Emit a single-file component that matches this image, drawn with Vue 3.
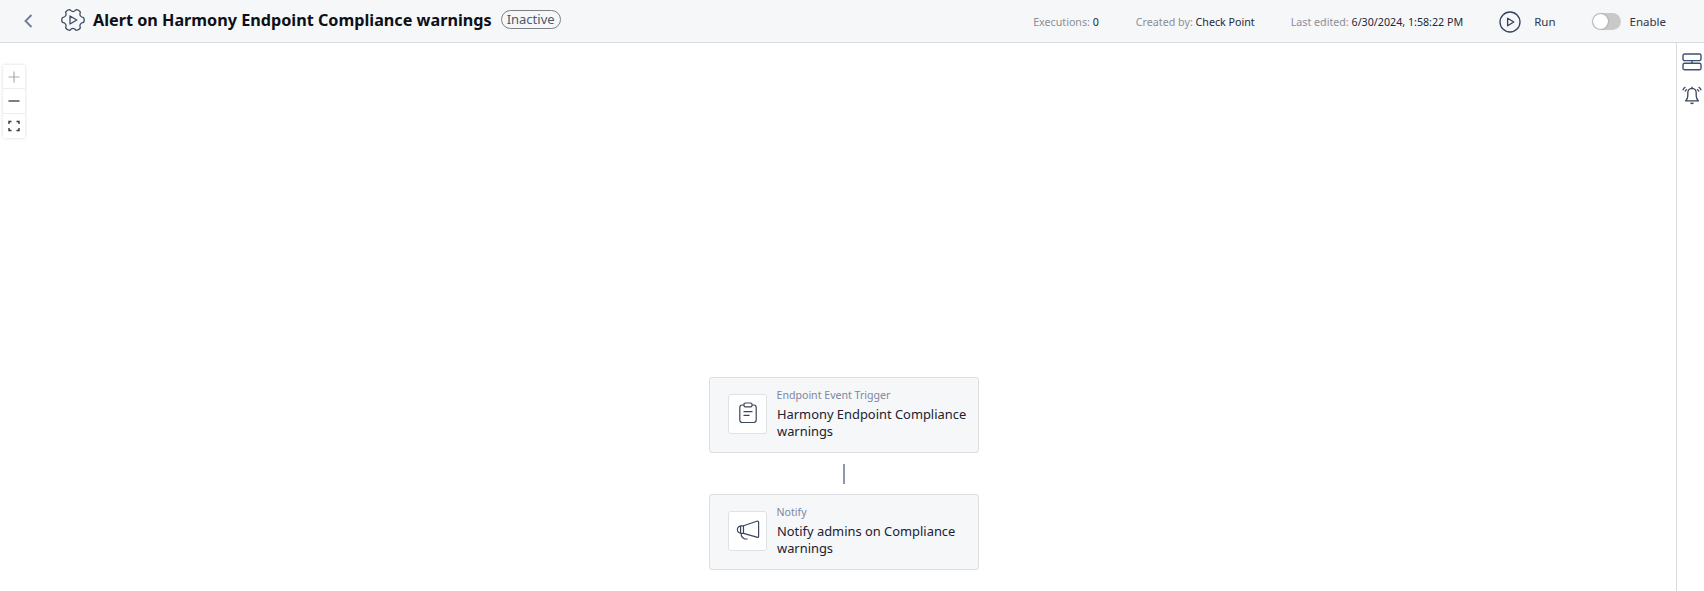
<script setup>
const nodes = [
  { id: 'trigger', kind: 'Endpoint Event Trigger', title: 'Harmony Endpoint Compliance warnings', icon: 'clip' },
  { id: 'notify', kind: 'Notify', title: 'Notify admins on Compliance warnings', icon: 'horn' }
]

function point(r, deg) {
  const a = (deg * Math.PI) / 180
  return `${(12 + r * Math.cos(a)).toFixed(2)} ${(12 + r * Math.sin(a)).toFixed(2)}`
}
const cog = [0, 60, 120, 180, 240, 300]
  .map((a, i) => {
    const start = i === 0 ? `M${point(10.8, a - 13)} ` : ''
    return `${start}Q${point(12, a)} ${point(10.8, a + 13)} Q${point(6.6, a + 30)} ${point(10.8, a + 47)}`
  })
  .join(' ') + ' Z'
</script>

<template>
  <div class="page">
    <header class="top">
      <button class="back" aria-label="Back">
        <svg width="12" height="16" viewBox="0 0 12 16"><path d="M9.5 2 L3.5 8 L9.5 14" fill="none" stroke="#6f7c9c" stroke-width="1.9"/></svg>
      </button>
      <svg class="gear" width="24" height="24" viewBox="0 0 24 24" fill="none" stroke="#3d4a62" stroke-width="1.3" stroke-linejoin="round">
        <path :d="cog"/>
        <path d="M9 8 L15.8 12 L9 16 Z"/>
      </svg>
      <h1 class="title">Alert on Harmony Endpoint Compliance warnings</h1>
      <span class="badge">Inactive</span>
      <div class="meta">
        <span class="stat stat-exec"><i>Executions:</i> 0</span>
        <span class="stat stat-by"><i>Created by:</i> Check Point</span>
        <span class="stat stat-edit"><i>Last edited:</i> 6/30/2024, 1:58:22 PM</span>
      </div>
      <svg class="run-icon" width="22" height="22" viewBox="0 0 22 22" fill="none" stroke="#33415c" stroke-width="1.3">
        <circle cx="11" cy="11" r="10"/>
        <path d="M8.6 7.2 L14.8 11 L8.6 14.8 Z" stroke-linejoin="round"/>
      </svg>
      <span class="run">Run</span>
      <span class="switch"><span class="knob"></span></span>
      <span class="enable">Enable</span>
    </header>

    <main class="body">
      <section class="canvas">
        <div class="zoom">
          <button class="zbtn">
            <svg width="12" height="12" viewBox="0 0 12 12"><path d="M6 .5 V11.5 M.5 6 H11.5" stroke="#a9adb3" stroke-width="1.2"/></svg>
          </button>
          <button class="zbtn">
            <svg width="12" height="12" viewBox="0 0 12 12"><path d="M.5 6 H11.5" stroke="#33383f" stroke-width="1.3"/></svg>
          </button>
          <button class="zbtn">
            <svg width="12" height="12" viewBox="0 0 12 12" fill="none" stroke="#33383f" stroke-width="1.4"><path d="M1 4 V1.5 H3.5 M8.5 1.5 H11 V4 M11 8 V10.5 H8.5 M3.5 10.5 H1 V8"/></svg>
          </button>
        </div>

        <div class="flow">
          <template v-for="(n, i) in nodes" :key="n.id">
            <div v-if="i > 0" class="link"></div>
            <article class="node">
              <div class="tile">
                <svg v-if="n.icon === 'clip'" class="tile-icon" width="22" height="22" viewBox="0 0 22 22" fill="none" stroke="#3a465c" stroke-width="1.2">
                  <rect x="2.8" y="3" width="16.4" height="17.5" rx="2.4"/>
                  <rect x="7" y="1" width="8" height="3.8" rx="1.3" fill="#fff"/>
                  <path d="M6.5 9.6 H15.5 M6.5 13.4 H12.5"/>
                </svg>
                <svg v-else class="tile-icon" width="24" height="24" viewBox="0 0 24 24" fill="none" stroke="#3a465c" stroke-width="1.2" stroke-linejoin="round">
                  <path d="M7.5 7.8 L21.6 3 Q22.6 3 22.6 4 V18.6 Q22.6 19.6 21.6 19.4 L7.5 15.4 Z"/>
                  <path d="M7.5 7.8 H5 Q1.4 8.4 1.4 11.6 Q1.4 14.8 5 15.4 H7.5 M4.6 8.4 V15"/>
                  <path d="M5 15.4 Q5.4 20 9 21 H11.6"/>
                </svg>
              </div>
              <div class="copy">
                <div class="kind">{{ n.kind }}</div>
                <div class="name">{{ n.title }}</div>
              </div>
            </article>
          </template>
        </div>
      </section>

      <aside class="side">
        <svg width="20" height="18" viewBox="0 0 20 18" fill="none" stroke="#3f5170" stroke-width="1.4">
          <rect x="1" y="1" width="18" height="6.6" rx="1.6"/>
          <rect x="1" y="10.2" width="18" height="6.6" rx="1.6"/>
          <path d="M10 7.6 V10.2"/>
        </svg>
        <svg class="bell" width="20" height="20" viewBox="0 0 20 20" fill="none" stroke="#3a465c" stroke-width="1.3" stroke-linejoin="round">
          <path d="M3.6 15.8 Q5.8 14 5.8 11 V8 Q5.8 3.6 10 3.4 Q14.2 3.6 14.2 8 V11 Q14.2 14 16.4 15.8 Z"/>
          <path d="M10 1.8 V3.4 M8.6 17.6 Q10 19.6 11.4 17.6"/>
          <path d="M.8 5.2 Q1.6 3.2 3.4 2 M3 6.6 Q3.6 5.2 4.8 4.2 M19.2 5.2 Q18.4 3.2 16.6 2 M17 6.6 Q16.4 5.2 15.2 4.2"/>
        </svg>
      </aside>
    </main>
  </div>
</template>

<style>
html, body { margin: 0; background: #fff; }
</style>

<style scoped>
.page {
  width: 1704px;
  height: 591px;
  display: flex;
  flex-direction: column;
  overflow: hidden;
  font-family: "Noto Sans", "Open Sans", sans-serif;
  color: #22293a;
  background: #fff;
}
.top {
  height: 42px;
  flex: none;
  display: flex;
  align-items: center;
  background: #f6f7f9;
  border-bottom: 1px solid #d9dbde;
}
.back {
  width: 12px;
  height: 16px;
  margin-left: 22px;
  padding: 0;
  border: 0;
  background: none;
  display: flex;
}
.gear { margin-left: 27px; margin-top: -3px; flex: none; }
.title {
  margin: -3px 0 0 8px;
  font-size: 16.2px;
  font-weight: 700;
  line-height: 22px;
  color: #0d1017;
  white-space: nowrap;
}
.badge {
  margin-left: 9px;
  height: 17px;
  padding: 0 5px;
  border: 1px solid #7d8187;
  border-radius: 10px;
  font-size: 13px;
  line-height: 16px;
  color: #50586a;
  margin-top: -4px;
}
.meta {
  margin-left: auto;
  margin-top: 1px;
  display: flex;
  font-size: 10.7px;
  color: #22293a;
  white-space: nowrap;
}
.stat i { font-style: normal; color: #8b8f96; }
.stat-by { margin-left: 37px; }
.stat-edit { margin-left: 36px; }
.run-icon { margin-left: 36px; margin-top: 2px; flex: none; }
.run { margin-left: 13px; font-size: 11.5px; color: #2d3648; }
.switch {
  margin-left: 36px;
  width: 29px;
  height: 17px;
  border-radius: 9px;
  background: #c9c9c9;
  display: flex;
  align-items: center;
  padding-left: 1px;
  box-sizing: border-box;
}
.knob {
  width: 15px;
  height: 15px;
  border-radius: 50%;
  background: #fff;
  box-shadow: 0 0 2px rgba(0, 0, 0, .35);
}
.enable { margin-left: 9px; margin-right: 38px; font-size: 11.5px; color: #2d3648; }
.body { flex: 1; display: flex; min-height: 0; }
.canvas { flex: 1; position: relative; min-width: 0; }
.zoom {
  position: absolute;
  left: 3px;
  top: 22px;
  width: 22px;
  background: #fff;
  box-shadow: 0 0 3px rgba(0, 0, 0, .16);
}
.zbtn {
  width: 22px;
  height: 24.3px;
  padding: 0;
  display: flex;
  align-items: center;
  justify-content: center;
  background: #fff;
  border: 0;
  border-bottom: 1px solid #eceded;
}
.zbtn:last-child { border-bottom: 0; }
.flow {
  position: absolute;
  left: 709px;
  top: 334px;
  width: 270px;
  display: flex;
  flex-direction: column;
  align-items: center;
}
.node {
  width: 270px;
  height: 76px;
  box-sizing: border-box;
  display: flex;
  padding: 16px 8px 0 18px;
  background: #f6f7f9;
  border: 1px solid #dcdee1;
  border-radius: 3px;
}
.tile {
  width: 39px;
  height: 40px;
  flex: none;
  box-sizing: border-box;
  display: flex;
  align-items: center;
  justify-content: center;
  background: #fff;
  border: 1px solid #dfe1e4;
  border-radius: 3px;
}
.tile-icon { margin-top: -3px; }
.copy { margin-left: 10px; margin-top: -7px; }
.kind { font-size: 10.6px; line-height: 16px; color: #7c86a2; margin-left: -0.5px; }
.name { margin-top: 3px; font-size: 12.9px; font-weight: 400; line-height: 17px; color: #1c2230; }
.link { width: 2px; height: 20px; margin: 11px 0 10px; background: #8c97b2; }
.side {
  width: 28px;
  flex: none;
  box-sizing: border-box;
  border-left: 1px solid #d9dbde;
  display: flex;
  flex-direction: column;
  align-items: center;
  padding-top: 10px;
  padding-left: 2px;
}
.bell { margin-top: 14px; }
</style>
